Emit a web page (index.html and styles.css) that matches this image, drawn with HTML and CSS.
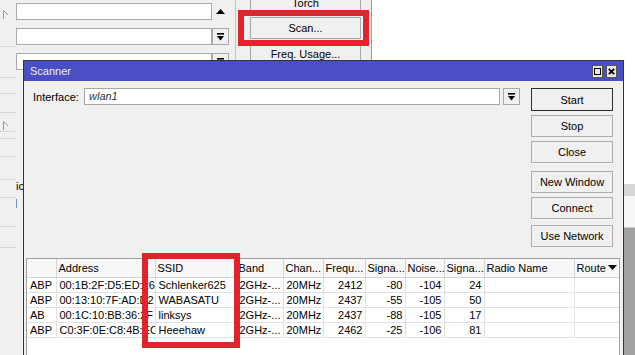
FILE: index.html
```html
<!DOCTYPE html>
<html>
<head>
<meta charset="utf-8">
<title>Scanner</title>
<link rel="stylesheet" href="styles.css">
</head>
<body>
<div class="desk">
  <div class="backwin">
    <div class="strip">
      <div class="c c47"><svg class="mark" width="7" height="9" viewBox="0 0 7 9"><path d="M1.5 0.5V9M1.5 0.5L6 5" fill="none" stroke="#9a9a9a" stroke-width="1"/></svg></div>
      <div class="c c31"></div>
      <div class="c c16"></div>
      <div class="c c19"></div>
      <div class="c c19 mk"><svg class="mark" width="7" height="9" viewBox="0 0 7 9"><path d="M1.5 0.5V9M1.5 0.5L6 5" fill="none" stroke="#9a9a9a" stroke-width="1"/></svg></div>
      <div class="c c7"></div>
      <div class="c c18"></div>
      <div class="c c23"></div>
      <div class="c c18"></div>
      <div class="c c29"></div>
      <div class="c c21"></div>
    </div>
    <div class="fields">
      <div class="frow">
        <div class="field"></div>
        <div class="upbtn"><svg width="9" height="5" viewBox="0 0 9 5"><path d="M0 5L4.5 0L9 5Z" fill="#000"/></svg></div>
      </div>
      <div class="frow">
        <div class="field"></div>
        <div class="ddbtn"><svg width="7" height="8" viewBox="0 0 7 8"><rect x="0" y="0" width="7" height="1.6" fill="#000"/><path d="M0 3L7 3L3.5 7.5Z" fill="#000"/></svg></div>
      </div>
      <div class="frow">
        <div class="field"></div>
        <div class="ddbtn"><svg width="7" height="8" viewBox="0 0 7 8"><rect x="0" y="0" width="7" height="1.6" fill="#000"/><path d="M0 3L7 3L3.5 7.5Z" fill="#000"/></svg></div>
      </div>
      <div class="frag">ic</div>
      <div class="caret"></div>
    </div>
    <div class="btnpanel">
      <div class="pbtn torch">Torch</div>
      <div class="pbtn">Scan...</div>
      <div class="pbtn">Freq. Usage...</div>
    </div>
  </div>

  <div class="rightbg">
    <div class="rb-white"></div>
    <div class="rb-band"></div>
    <div class="rb-gap"></div>
    <div class="rb-dark"></div>
  </div>

  <div class="hl hl-scan"></div>

  <div class="win">
    <div class="titlebar">
      <span class="title">Scanner</span>
      <div class="tbtns">
        <span class="tb"><svg width="7" height="7" viewBox="0 0 7 7"><rect x="0.5" y="0.5" width="6" height="6" fill="none" stroke="#000" stroke-width="1"/></svg></span>
        <span class="tb"><svg width="7" height="7" viewBox="0 0 7 7"><path d="M0.8 0.8L6.2 6.2M6.2 0.8L0.8 6.2" stroke="#000" stroke-width="1.8"/></svg></span>
      </div>
    </div>
    <div class="wbody">
      <div class="top">
        <div class="ifrow">
          <span class="iflabel">Interface:</span>
          <div class="ifinput">wlan1</div>
          <div class="ddbtn"><svg width="7" height="8" viewBox="0 0 7 8"><rect x="0" y="0" width="7" height="1.6" fill="#000"/><path d="M0 3L7 3L3.5 7.5Z" fill="#000"/></svg></div>
        </div>
        <div class="actions">
          <div class="btn default">Start</div>
          <div class="btn">Stop</div>
          <div class="btn">Close</div>
          <div class="btn sep">New Window</div>
          <div class="btn">Connect</div>
          <div class="btn sep2">Use Network</div>
        </div>
      </div>
      <div class="grid">
        <table>
          <colgroup>
            <col class="w-flag"><col class="w-addr"><col class="w-ssid"><col class="w-band"><col class="w-chan"><col class="w-freq"><col class="w-sig"><col class="w-noise"><col class="w-snr"><col class="w-radio"><col class="w-route">
          </colgroup>
          <thead>
            <tr>
              <th></th><th>Address</th><th>SSID</th><th>Band</th><th>Chan...</th><th>Frequ...</th><th>Signa...</th><th>Noise...</th><th>Signa...</th><th>Radio Name</th>
              <th><div class="hcell"><span class="ht">Route</span><svg width="9" height="5" viewBox="0 0 9 5"><path d="M0 0L9 0L4.5 5Z" fill="#000"/></svg></div></th>
            </tr>
          </thead>
          <tbody>
            <tr><td>ABP</td><td>00:1B:2F:D5:ED:26</td><td>Schlenker625</td><td>2GHz-...</td><td>20MHz</td><td class="num">2412</td><td class="num">-80</td><td class="num">-104</td><td class="num">24</td><td></td><td></td></tr>
            <tr><td>ABP</td><td>00:13:10:7F:AD:D2</td><td>WABASATU</td><td>2GHz-...</td><td>20MHz</td><td class="num">2437</td><td class="num">-55</td><td class="num">-105</td><td class="num">50</td><td></td><td></td></tr>
            <tr><td>AB</td><td>00:1C:10:BB:36:2F</td><td>linksys</td><td>2GHz-...</td><td>20MHz</td><td class="num">2437</td><td class="num">-88</td><td class="num">-105</td><td class="num">17</td><td></td><td></td></tr>
            <tr><td>ABP</td><td>C0:3F:0E:C8:4B:EC</td><td>Heeehaw</td><td>2GHz-...</td><td>20MHz</td><td class="num">2462</td><td class="num">-25</td><td class="num">-106</td><td class="num">81</td><td></td><td></td></tr>
          </tbody>
        </table>
      </div>
    </div>
  </div>

  <div class="hl hl-ssid"></div>
</div>
</body>
</html>
```

FILE: styles.css
```css
* { box-sizing: border-box; }
html, body { margin: 0; padding: 0; }
body {
  width: 635px;
  height: 355px;
  overflow: hidden;
  background: #fff;
  font-family: "Liberation Sans", Arial, sans-serif;
  font-size: 11px;
  color: #000;
}
.desk { position: relative; width: 635px; height: 355px; overflow: hidden; }

/* background window */
.backwin {
  position: absolute;
  left: 0; top: 0;
  width: 372px; height: 355px;
  background: #f0f0f0;
  border-right: 1px solid #9a9a9a;
  display: flex;
}
.strip { width: 16px; display: flex; flex-direction: column; }
.c { border-bottom: 1px solid #d6d6d6; padding-left: 2px; }
.c47 { height: 47px; padding-top: 10px; }
.c31 { height: 31px; }
.c16 { height: 16px; }
.c19 { height: 19px; }
.c19.mk { padding-top: 8px; }
.c7 { height: 7px; }
.c18 { height: 18px; }
.c23 { height: 23px; }
.c29 { height: 29px; }
.c21 { height: 21px; }
.mark { display: block; }

.fields { width: 213px; padding-top: 3px; display: flex; flex-direction: column; }
.frow { display: flex; height: 17px; margin-bottom: 8px; }
.field { width: 196px; height: 17px; background: #fff; border: 1px solid #a9a9a9; }
.upbtn { width: 17px; height: 17px; display: flex; align-items: center; justify-content: center; }
.ddbtn {
  width: 17px; height: 17px;
  background: #f0f0f0;
  border: 1px solid #a9a9a9;
  display: flex; align-items: center; justify-content: center;
}
.frag { margin-top: 101px; line-height: 14px; font-size: 11px; }
.caret { width: 1px; height: 9px; background: #7d8fbd; margin-top: 6px; }

.btnpanel {
  margin-left: 6px;
  border-left: 1px solid #c4c4c4;
  padding: 0 10px 0 14px;
  display: flex; flex-direction: column;
}
.pbtn {
  width: 111px; height: 22px;
  border: 1px solid #a8a8a8;
  background: #f0f0f0;
  display: flex; align-items: center; justify-content: center;
  margin-bottom: 4px;
}
.pbtn.torch { margin-top: -8px; margin-bottom: 3px; }

/* right edge remnants */
.rightbg { position: absolute; left: 624px; top: 0; width: 11px; height: 355px; display: flex; flex-direction: column; }
.rb-white { height: 184px; background: #fff; }
.rb-band { height: 12px; background: #d7d7d7; }
.rb-gap { height: 32px; background: #f7f7f7; border-bottom: 1px solid #c8c8c8; }
.rb-dark { flex: 1; background: #a2a2a2; }

/* highlight boxes */
.hl { position: absolute; border: 6px solid #e1232b; z-index: 5; }
.hl-scan { left: 238px; top: 10px; width: 131px; height: 36px; }
.hl-ssid { left: 142px; top: 253px; width: 98px; height: 95px; }

/* scanner window */
.win {
  position: absolute;
  left: 23px; top: 60px;
  width: 601px; height: 300px;
  background: #f0f0f0;
  border: 1px solid #333;
  z-index: 2;
}
.titlebar {
  height: 20px;
  background: #4a4fc6;
  display: flex; align-items: center; justify-content: space-between;
  padding: 0 6px 0 6px;
}
.title { color: #eceefa; font-size: 11px; }
.tbtns { display: flex; gap: 3px; }
.tb {
  width: 11px; height: 13px;
  background: #e8e8e8;
  border: 1px solid #555;
  display: flex; align-items: center; justify-content: center;
}

.top { display: flex; gap: 11px; padding: 7px 10px 0 9px; }
.ifrow { flex: 1; display: flex; align-items: center; height: 17px; }
.iflabel { width: 51px; }
.ifinput {
  width: 416px; height: 17px;
  background: #fff;
  border: 1px solid #a6a6a6;
  padding-left: 4px;
  font-style: italic;
  color: #333;
  line-height: 15px;
  margin-right: 3px;
}
.actions { width: 82px; display: flex; flex-direction: column; gap: 4px; }
.btn {
  height: 22px;
  border: 1px solid #acacac;
  background: #f0f0f0;
  display: flex; align-items: center; justify-content: center;
}
.btn.default { height: 23px; border-color: #2e2e2e; }
.btn.sep { margin-top: 4px; }
.btn.sep2 { margin-top: 2px; }

.grid {
  margin: 11px 3px 0 2px;
  height: 120px;
  background: #fff;
  border: 1px solid #a0a0a0;
}
table { border-collapse: collapse; table-layout: fixed; width: 592px; }
.w-flag { width: 29px; }
.w-addr { width: 99px; }
.w-ssid { width: 81px; }
.w-band { width: 47px; }
.w-chan { width: 40px; }
.w-freq { width: 42px; }
.w-sig { width: 40px; }
.w-noise { width: 39px; }
.w-snr { width: 40px; }
.w-radio { width: 90px; }
.w-route { width: 45px; }
th {
  height: 18px;
  padding: 0 0 0 2px;
  background: #f7f7f7;
  font-weight: normal;
  text-align: left;
  white-space: nowrap;
  overflow: hidden;
  border-right: 1px solid #d4d4d4;
  border-bottom: 1px solid #d4d4d4;
}
th:last-child { border-right: none; padding-right: 2px; }
.hcell { display: flex; align-items: center; }
.ht { flex: 1; overflow: hidden; white-space: nowrap; }
td {
  height: 15px;
  padding: 0 2px 0 3px;
  line-height: 14px;
  white-space: nowrap;
  overflow: hidden;
  border-right: 1px solid #e2e2e2;
  border-bottom: 1px solid #e2e2e2;
}
td:last-child { border-right: none; }
td.num { text-align: right; }
```
